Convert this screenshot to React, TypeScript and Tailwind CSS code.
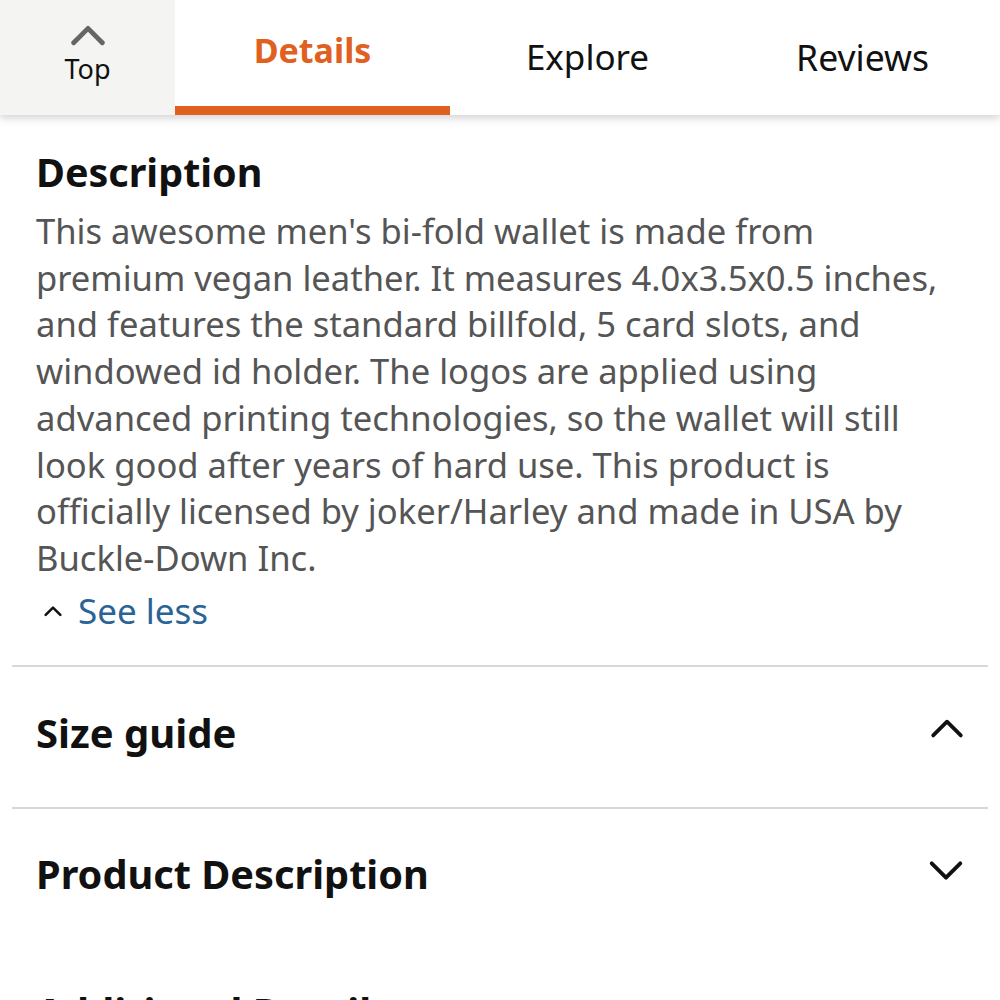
import React from "react";

const lines = [
  "This awesome men's bi-fold wallet is made from",
  "premium vegan leather. It measures 4.0x3.5x0.5 inches,",
  "and features the standard billfold, 5 card slots, and",
  "windowed id holder. The logos are applied using",
  "advanced printing technologies, so the wallet will still",
  "look good after years of hard use. This product is",
  "officially licensed by joker/Harley and made in USA by",
  "Buckle-Down Inc.",
];

function Up({ className, sw = 3.5 }: { className?: string; sw?: number }) {
  return (
    <svg viewBox="0 0 32 20" className={className} fill="none" stroke="currentColor" strokeWidth={sw} strokeLinecap="round" strokeLinejoin="round">
      <path d="M3 17 L16 4 L29 17" />
    </svg>
  );
}
function Down({ className, sw = 3.5 }: { className?: string; sw?: number }) {
  return (
    <svg viewBox="0 0 32 20" className={className} fill="none" stroke="currentColor" strokeWidth={sw} strokeLinecap="round" strokeLinejoin="round">
      <path d="M3 3 L16 16 L29 3" />
    </svg>
  );
}

export default function App() {
  return (
    <div className="w-[1000px] h-[1000px] overflow-hidden bg-white" style={{ fontFamily: '"Noto Sans", "Open Sans", sans-serif' }}>
      <div className="relative z-10 flex h-[115px] bg-white shadow-[0_3px_8px_rgba(0,0,0,0.18)]">
        <div className="w-[175px] bg-[#f4f5f3] flex flex-col items-center pt-[24px]">
          <Up className="w-[36px] h-[22px] text-[#666]" sw={4.4} />
          <span className="text-[27px] leading-[34px] text-[#111] mt-[6px]">Top</span>
        </div>
        <div className="w-[275px] flex flex-col">
          <div className="flex-1 flex items-center justify-center pb-[6px]">
            <span className="text-[34px] font-bold text-[#e0601f]">Details</span>
          </div>
          <div className="h-[9px] bg-[#e0601f]" />
        </div>
        <div className="w-[275px] flex items-center justify-center">
          <span className="text-[35px] text-[#111]">Explore</span>
        </div>
        <div className="w-[275px] flex items-center justify-center">
          <span className="text-[35.5px] text-[#111]">Reviews</span>
        </div>
      </div>

      <div className="px-[12px]">
        <div className="px-[24px] pt-[31px] pb-[31px]">
          <h2 className="text-[39.5px] leading-[52px] font-bold text-[#111]">Description</h2>
          <div className="text-[34.6px] leading-[46.7px] text-[#555] mt-[10px]">
            {lines.map((l, i) => (
              <div key={i} className="whitespace-nowrap">{l}</div>
            ))}
          </div>
          <div className="flex items-center mt-[6px] h-[46px]">
            <Up className="w-[18px] h-[12px] text-[#111] ml-[8px] mr-[16px]" sw={4.5} />
            <span className="text-[35px] leading-[46px] text-[#2a6496]">See less</span>
          </div>
        </div>
        <div className="h-[2px] bg-[#d8d8d8]" />
        <div className="h-[140px] flex items-center justify-between pl-[24px] pr-[24px] pb-[8px]">
          <span className="text-[40px] font-bold text-[#111]">Size guide</span>
          <Up className="w-[34px] h-[22px] text-[#111] -mt-[10px]" />
        </div>
        <div className="h-[2px] bg-[#d8d8d8]" />
        <div className="h-[132px] flex items-center justify-between pl-[24px] pr-[24px]">
          <span className="text-[39.7px] font-bold text-[#111]">Product Description</span>
          <Down className="w-[36px] h-[22px] text-[#111] -mt-[8px]" />
        </div>
        <div className="pl-[24px] pt-[44px]">
          <span className="text-[40px] leading-[54px] font-bold text-[#111] whitespace-nowrap">Additional Details</span>
        </div>
      </div>
    </div>
  );
}
